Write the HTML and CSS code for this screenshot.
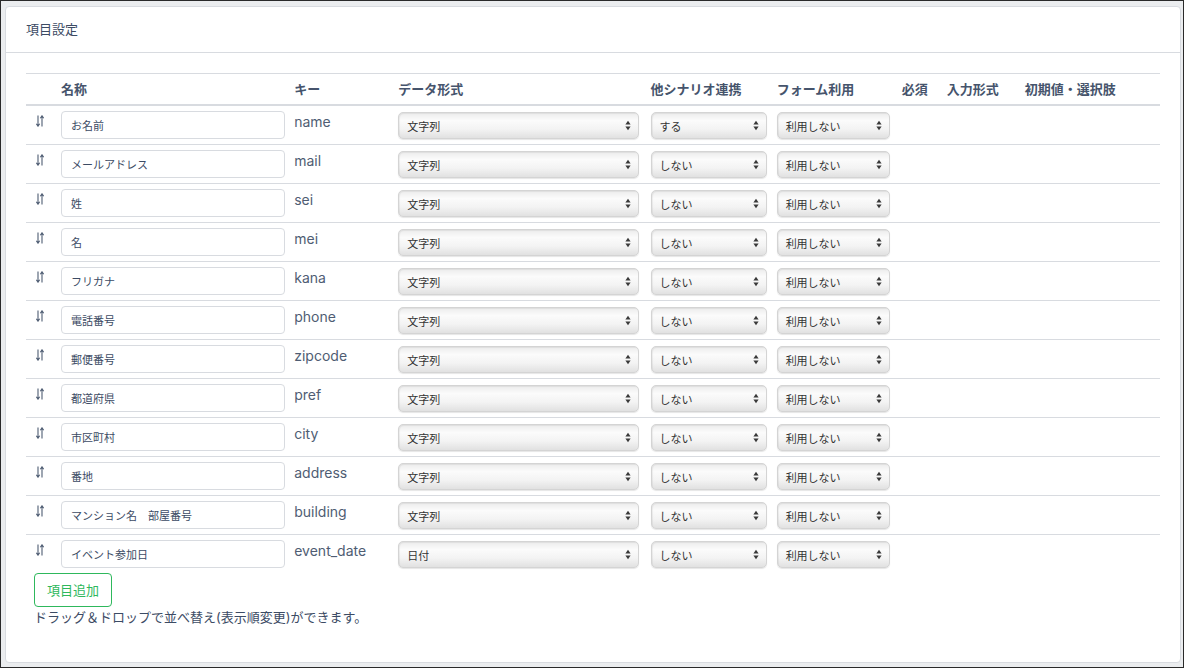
FILE: index.html
```html
<!DOCTYPE html>
<html lang="ja">
<head>
<meta charset="utf-8">
<title>項目設定</title>
<link rel="stylesheet" href="styles.css">
</head>
<body>
<div class="frame">
  <div class="card">
    <div class="card-header">項目設定</div>
    <div class="card-body">
      <table class="items">
        <colgroup>
          <col class="c-sort"><col class="c-name"><col class="c-key"><col class="c-data"><col class="c-other"><col class="c-form"><col class="c-req"><col class="c-input"><col class="c-init">
        </colgroup>
        <thead>
          <tr>
            <th></th><th>名称</th><th>キー</th><th>データ形式</th><th>他シナリオ連携</th><th>フォーム利用</th><th>必須</th><th>入力形式</th><th>初期値・選択肢</th>
          </tr>
        </thead>
        <tbody id="rows"></tbody>
      </table>
      <button class="btn-add" type="button">項目追加</button>
      <p class="note">ドラッグ＆ドロップで並べ替え(表示順変更)ができます。</p>
    </div>
  </div>
</div>
<script src="script.js"></script>
</body>
</html>
```

FILE: script.js
```js
const data = [
  ["お名前", "name", "文字列", "する"],
  ["メールアドレス", "mail", "文字列", "しない"],
  ["姓", "sei", "文字列", "しない"],
  ["名", "mei", "文字列", "しない"],
  ["フリガナ", "kana", "文字列", "しない"],
  ["電話番号", "phone", "文字列", "しない"],
  ["郵便番号", "zipcode", "文字列", "しない"],
  ["都道府県", "pref", "文字列", "しない"],
  ["市区町村", "city", "文字列", "しない"],
  ["番地", "address", "文字列", "しない"],
  ["マンション名　部屋番号", "building", "文字列", "しない"],
  ["イベント参加日", "event_date", "日付", "しない"]
];
const sortIcon = '<svg class="sort-icon" width="8" height="12" viewBox="0 0 8 12" fill="none" stroke="#4f5d73" stroke-width="1.1"><path d="M2 0.5V11.2M0.3 8.8L2 11.2L3.7 8.8"/><path d="M6 11.5V0.8M4.3 3.2L6 0.8L7.7 3.2"/></svg>';
const arrows = '<svg class="sel-arrow" width="6" height="11" viewBox="0 0 6 11"><path d="M0.4 4.4L3 0.8L5.6 4.4Z" fill="#3a3a3a"/><path d="M0.4 6.6L3 10.2L5.6 6.6Z" fill="#3a3a3a"/></svg>';
const sel = (cls, text) => `<div class="select ${cls}"><span>${text}</span>${arrows}</div>`;
const tbody = document.getElementById("rows");
tbody.innerHTML = data.map(([n, k, d, o]) => `
<tr>
  <td class="sort">${sortIcon}</td>
  <td><input class="name-input" type="text" value="${n}"></td>
  <td class="key">${k}</td>
  <td>${sel("s-data", d)}</td>
  <td>${sel("s-other", o)}</td>
  <td>${sel("s-form", "利用しない")}</td>
  <td></td><td></td><td></td>
</tr>`).join("");
```

FILE: styles.css
```css
html, body {
  margin: 0;
  height: 100%;
}
body {
  font-family: Inter, "Noto Sans CJK JP", sans-serif;
  color: #3c4b64;
  background: #ebedef;
}
.frame {
  box-sizing: border-box;
  height: 100vh;
  border: 1px solid #2a2a2a;
  padding: 5px 2px 4px 4px;
  display: flex;
  flex-direction: column;
}
.card {
  flex: 1;
  background: #fff;
  border: 1px solid #d8dbe0;
  border-radius: 4px;
  display: flex;
  flex-direction: column;
}
.card-header {
  padding: 12px 20px;
  font-size: 13px;
  line-height: 21px;
  color: #3c4b64;
  border-bottom: 1px solid #d8dbe0;
}
.card-body {
  padding: 20px;
}
.items {
  width: 100%;
  table-layout: fixed;
  border-collapse: collapse;
}
.c-sort { width: 30px; }
.c-name { width: 233px; }
.c-key { width: 104px; }
.c-data { width: 252px; }
.c-other { width: 126px; }
.c-form { width: 125px; }
.c-req { width: 45px; }
.c-input { width: 78px; }
.c-init { width: 140px; }
.items th {
  text-align: left;
  font-size: 13px;
  font-weight: 600;
  line-height: 20px;
  padding: 5px;
  color: #46546c;
  border-top: 1px solid #d8dbe0;
  border-bottom: 2px solid #d8dbe0;
}
.items td {
  padding: 5px;
  vertical-align: top;
  border-top: 1px solid #d8dbe0;
  height: 28px;
}
.items tbody tr:first-child td {
  border-top: none;
}
.items td.sort {
  padding-left: 10px;
}
.sort-icon {
  display: block;
  margin-top: 4px;
}
.name-input {
  display: block;
  box-sizing: border-box;
  width: 224px;
  height: 28px;
  border: 1px solid #d8dbe0;
  border-radius: 4px;
  padding: 0 9px;
  font-family: Inter, "Noto Sans CJK JP", sans-serif;
  font-size: 11px;
  color: #3c4b64;
  background: #fff;
  margin: 0;
}
.items td.key {
  font-size: 14px;
  line-height: 21px;
  color: #4f5d73;
}
.select {
  box-sizing: border-box;
  height: 27px;
  margin-top: 1px;
  display: flex;
  align-items: center;
  justify-content: space-between;
  padding: 0 7px 0 8px;
  font-size: 11px;
  color: #333;
  border: 1px solid #d4d4d4;
  border-radius: 5px;
  background: linear-gradient(180deg, #ececec 0%, #fbfbfb 30%, #f3f3f3 65%, #e1e1e1 100%);
  box-shadow: inset 1px 1px 1px rgba(0, 0, 0, 0.06), 0 1px 1px rgba(0, 0, 0, 0.1);
}
.sel-arrow {
  flex: none;
}
.s-data { width: 241px; }
.s-other { width: 116px; }
.s-form { width: 113px; }
.btn-add {
  display: block;
  margin: 0 0 0 8px;
  padding: 6px 12px;
  font-family: Inter, "Noto Sans CJK JP", sans-serif;
  font-size: 13px;
  line-height: 20px;
  color: #2eb85c;
  background: #fff;
  border: 1px solid #2eb85c;
  border-radius: 4px;
}
.note {
  margin: 0 0 0 8px;
  font-size: 13px;
  line-height: 21px;
  color: #3c4b64;
}
```
